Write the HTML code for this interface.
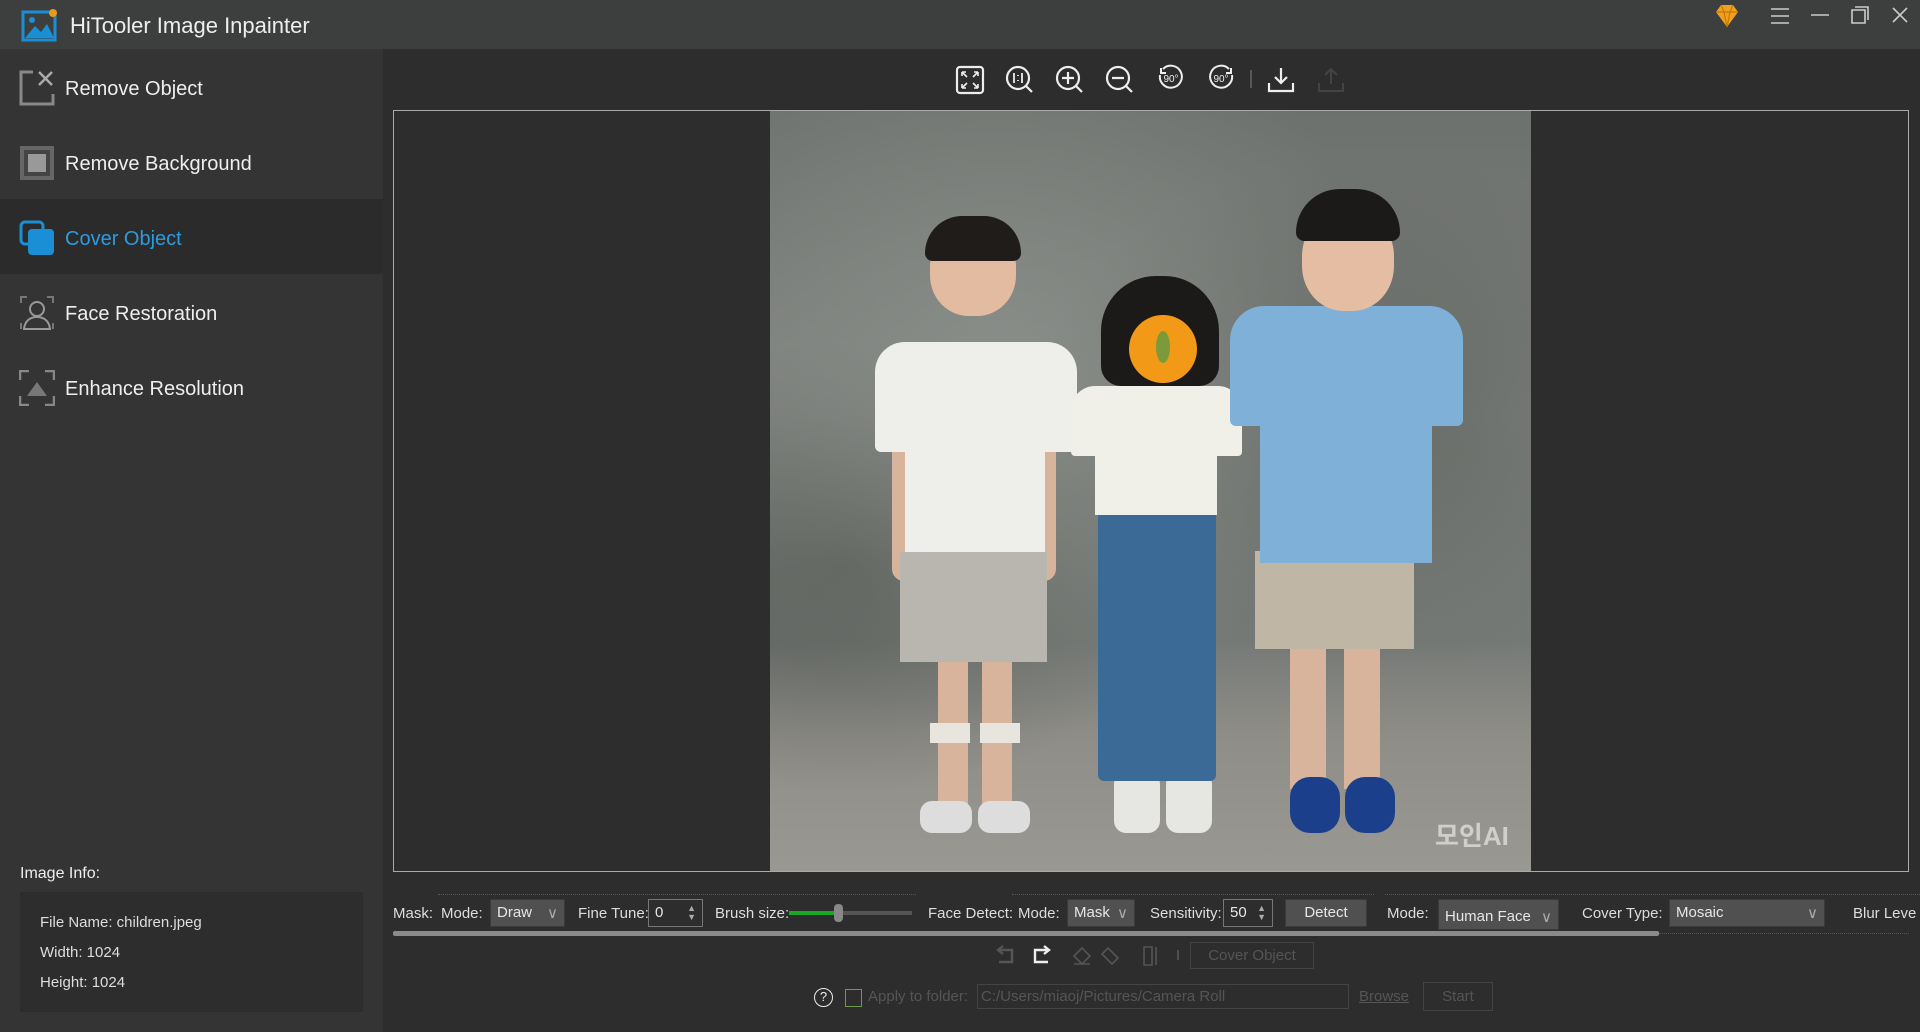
<!DOCTYPE html>
<html><head><meta charset="utf-8"><style>
*{margin:0;padding:0;box-sizing:border-box}
body{width:1920px;height:1032px;background:#2c2d2c;font-family:"Liberation Sans",sans-serif;color:#ddd;position:relative;overflow:hidden}
.a{position:absolute}
#title{left:0;top:0;width:1920px;height:49px;background:#3d3f3f}
#side{left:0;top:49px;width:383px;height:983px;background:#343434}
.item{position:absolute;left:0;width:383px;height:75px;font-size:20px;color:#eee}
.item span{position:absolute;left:65px;top:29px}
.item svg{position:absolute;left:19px;top:21px}
.t{position:absolute;font-size:15px;color:#ddd;white-space:nowrap}
.dd{position:absolute;background:#505050;border:1px solid #3a3a3a;font-size:15px;color:#e6e6e6;padding:4px 6px}
.dis{color:#555}
</style></head><body>
<div id="title" class="a">
<svg class="a" style="left:21px;top:7px" width="38" height="36" viewBox="0 0 38 36"><rect x="2" y="5" width="32" height="28" fill="none" stroke="#1a8fd6" stroke-width="3"/><circle cx="11" cy="13" r="3" fill="#1a8fd6"/><path d="M4 31 L14 19 L20 25 L26 17 L33 31Z" fill="#1a8fd6"/><circle cx="32" cy="6" r="4" fill="#e89a1c"/></svg>
<div class="a" style="left:70px;top:13px;font-size:22px;color:#eee">HiTooler Image Inpainter</div>
<svg class="a" style="left:1712px;top:3px" width="30" height="26" viewBox="0 0 30 26"><path d="M4 9 L9 2 H21 L26 9 L15 24Z" fill="#f0a020"/><path d="M4 9H26M9 2L12 9L15 24L18 9L21 2" stroke="#c57a00" stroke-width="1.2" fill="none"/></svg>
<svg class="a" style="left:1770px;top:6px" width="20" height="20"><path d="M1 3H19M1 10H19M1 17H19" stroke="#ccc" stroke-width="1.6"/></svg>
<svg class="a" style="left:1810px;top:6px" width="20" height="20"><path d="M1 9H19" stroke="#ccc" stroke-width="1.6"/></svg>
<svg class="a" style="left:1850px;top:5px" width="20" height="20"><path d="M5 2H18V15M2 5H15V18H2Z" stroke="#ccc" stroke-width="1.6" fill="none"/></svg>
<svg class="a" style="left:1890px;top:5px" width="20" height="20"><path d="M3 3L17 17M17 3L3 17" stroke="#ccc" stroke-width="1.6"/></svg>
</div>
<div id="side" class="a">
<div class="item" style="top:0"><svg width="36" height="36"><path d="M14 2H2V34H34V24" stroke="#888" stroke-width="3" fill="none"/><path d="M20 2L33 15M33 2L20 15" stroke="#aaa" stroke-width="2.5"/></svg><span>Remove Object</span></div>
<div class="item" style="top:75px"><svg width="36" height="36"><rect x="1" y="1" width="34" height="34" fill="#666"/><rect x="5" y="5" width="26" height="26" fill="#444"/><rect x="9" y="9" width="18" height="18" fill="#999"/></svg><span>Remove Background</span></div>
<div class="item" style="top:150px;background:#2b2b2b;color:#2d9be0"><svg width="36" height="36"><rect x="2" y="2" width="22" height="22" rx="4" fill="none" stroke="#1a8fd6" stroke-width="3"/><rect x="9" y="9" width="26" height="26" rx="4" fill="#1a8fd6"/></svg><span>Cover Object</span></div>
<div class="item" style="top:225px"><svg width="36" height="36"><path d="M2 8V2H8M28 2H34V8M2 28V34M34 28V34" stroke="#777" stroke-width="2" fill="none"/><circle cx="18" cy="14" r="7" stroke="#999" stroke-width="2" fill="none"/><path d="M5 34C6 25 12 22 18 22C24 22 30 25 31 34Z" stroke="#999" stroke-width="2" fill="none"/></svg><span>Face Restoration</span></div>
<div class="item" style="top:300px"><svg width="36" height="36"><path d="M1 10V1H10M26 1H35V10M1 26V35H10M26 35H35V26" stroke="#888" stroke-width="2.5" fill="none"/><path d="M8 26L18 12L28 26Z" fill="#777"/></svg><span>Enhance Resolution</span></div>
<div class="a" style="left:20px;top:816px;font-size:16px;color:#eee">Image Info:</div>
<div class="a" style="left:20px;top:843px;width:343px;height:120px;background:#2c2d2c"></div>
<div class="t" style="left:40px;top:865px">File Name: children.jpeg</div>
<div class="t" style="left:40px;top:895px">Width: 1024</div>
<div class="t" style="left:40px;top:925px">Height: 1024</div>
</div>
<!-- top toolbar -->
<svg class="a" style="left:950px;top:64px" width="400" height="34" viewBox="0 0 400 34">
<g stroke="#eee" stroke-width="2.2" fill="none">
<rect x="7" y="3" width="26" height="26" rx="3"/><path d="M12 8L17 13M12 8V12M12 8H16M28 8L23 13M28 8V12M28 8H24M12 24L17 19M12 24V20M12 24H16M28 24L23 19M28 24V20M28 24H24" stroke-width="1.6"/>
<circle cx="68" cy="14" r="11"/><path d="M76 22L82 28"/><path d="M64 9V19M72 9V19M68 11V12M68 16V17" stroke-width="1.8"/>
<circle cx="118" cy="14" r="11"/><path d="M126 22L132 28M112 14H124M118 8V20"/>
<circle cx="168" cy="14" r="11"/><path d="M176 22L182 28M162 14H174"/>
<path d="M213 5A11 11 0 1 1 210 11M211 4V9H216" stroke-width="2"/>
<path d="M279 5A11 11 0 1 0 282 11M281 4V9H276" stroke-width="2"/>
<path d="M331 4V19M325 13L331 19L337 13M319 19V27H343V19"/>
</g>
<text x="221" y="18" font-size="10" fill="#eee" text-anchor="middle" font-family="Liberation Sans">90°</text>
<text x="271" y="18" font-size="10" fill="#eee" text-anchor="middle" font-family="Liberation Sans">90°</text>
<path d="M301 6V24" stroke="#666" stroke-width="1.5"/>
<path d="M381 20V5M375 11L381 5L387 11M369 19V27H393V19" stroke="#444" stroke-width="2" fill="none"/>
</svg>
<!-- canvas -->
<div class="a" style="left:393px;top:110px;width:1516px;height:762px;border:1px solid #aaa;background:#2c2d2c"></div>
<div class="a" style="left:770px;top:111px;width:761px;height:760px;overflow:hidden;background:linear-gradient(180deg,#6d716d 0%,#80837f 40%,#767a76 70%,#8e8d88 82%,#9a9892 100%)">
<div class="a" style="left:0;top:0;width:761px;height:760px;background:radial-gradient(ellipse at 30% 30%,rgba(150,155,150,.5),transparent 50%),radial-gradient(ellipse at 80% 40%,rgba(60,65,60,.35),transparent 40%),radial-gradient(ellipse at 10% 60%,rgba(50,55,50,.4),transparent 35%)"></div>
<!-- left boy -->
<div class="a" style="left:122px;top:330px;width:26px;height:140px;background:#d8b49c;border-radius:12px"></div>
<div class="a" style="left:260px;top:330px;width:26px;height:140px;background:#d8b49c;border-radius:12px"></div>
<div class="a" style="left:168px;top:540px;width:30px;height:160px;background:#d8b49c"></div>
<div class="a" style="left:212px;top:540px;width:30px;height:160px;background:#d8b49c"></div>
<div class="a" style="left:160px;top:612px;width:40px;height:20px;background:#e8e4de"></div>
<div class="a" style="left:210px;top:612px;width:40px;height:20px;background:#e8e4de"></div>
<div class="a" style="left:150px;top:690px;width:52px;height:32px;background:#ddd;border-radius:12px"></div>
<div class="a" style="left:208px;top:690px;width:52px;height:32px;background:#ddd;border-radius:12px"></div>
<div class="a" style="left:130px;top:441px;width:147px;height:110px;background:#b8b6ae"></div>
<div class="a" style="left:105px;top:231px;width:202px;height:110px;background:#eeeeea;border-radius:30px 30px 6px 6px"></div>
<div class="a" style="left:135px;top:300px;width:140px;height:141px;background:#eeeeea"></div>
<div class="a" style="left:160px;top:115px;width:86px;height:90px;background:#e2bba0;border-radius:45%"></div>
<div class="a" style="left:155px;top:105px;width:96px;height:45px;background:#1f1c1a;border-radius:48px 48px 10px 10px"></div>
<!-- girl -->
<div class="a" style="left:344px;top:661px;width:46px;height:61px;background:#e6e6e2;border-radius:12px"></div>
<div class="a" style="left:396px;top:661px;width:46px;height:61px;background:#e6e6e2;border-radius:12px"></div>
<div class="a" style="left:328px;top:392px;width:118px;height:278px;background:#3c6a96;border-radius:6px"></div>
<div class="a" style="left:301px;top:275px;width:171px;height:70px;background:#f0efe8;border-radius:24px 24px 4px 4px"></div>
<div class="a" style="left:325px;top:330px;width:122px;height:74px;background:#f0efe8"></div>
<div class="a" style="left:331px;top:165px;width:118px;height:110px;background:#1c1a18;border-radius:55px 55px 20px 20px"></div>
<div class="a" style="left:359px;top:204px;width:68px;height:68px;background:#f29a18;border-radius:50%"></div>
<div class="a" style="left:386px;top:220px;width:14px;height:32px;background:#7c9a3a;border-radius:50%"></div>
<!-- right boy -->
<div class="a" style="left:520px;top:538px;width:36px;height:140px;background:#d8b49c"></div>
<div class="a" style="left:574px;top:538px;width:36px;height:140px;background:#d8b49c"></div>
<div class="a" style="left:520px;top:666px;width:50px;height:56px;background:#1b3f8a;border-radius:20px"></div>
<div class="a" style="left:575px;top:666px;width:50px;height:56px;background:#1b3f8a;border-radius:20px"></div>
<div class="a" style="left:485px;top:440px;width:159px;height:98px;background:#bfb6a6"></div>
<div class="a" style="left:460px;top:195px;width:233px;height:120px;background:#7fb0d8;border-radius:34px 34px 6px 6px"></div>
<div class="a" style="left:490px;top:300px;width:172px;height:152px;background:#7fb0d8"></div>
<div class="a" style="left:532px;top:100px;width:92px;height:100px;background:#e4bda2;border-radius:45%"></div>
<div class="a" style="left:526px;top:78px;width:104px;height:52px;background:#1c1a18;border-radius:52px 52px 10px 10px"></div>
<div class="a" style="left:665px;top:705px;font-size:26px;color:rgba(255,255,255,.55);font-family:'Liberation Sans','Noto Sans CJK KR',sans-serif;font-weight:bold">모인AI</div>
</div>
<!-- bottom toolbar -->
<div class="a" style="left:438px;top:894px;width:478px;border-top:1px dotted #555"></div>
<div class="a" style="left:1012px;top:894px;width:362px;border-top:1px dotted #555"></div>
<div class="a" style="left:1385px;top:894px;width:535px;border-top:1px dotted #555"></div>
<div class="t" style="left:393px;top:905px">Mask:</div>
<div class="t" style="left:441px;top:905px">Mode:</div>
<div class="dd" style="left:490px;top:899px;width:75px;height:28px">Draw <span style="float:right;color:#aaa">∨</span></div>
<div class="t" style="left:578px;top:905px">Fine Tune:</div>
<div class="dd" style="left:648px;top:899px;width:55px;height:28px;background:#2c2d2c;border-color:#777">0 <span style="float:right;font-size:9px;color:#aaa;line-height:9px">▲<br>▼</span></div>
<div class="t" style="left:715px;top:905px">Brush size:</div>
<div class="a" style="left:789px;top:911px;width:123px;height:4px;background:#555"></div>
<div class="a" style="left:789px;top:911px;width:50px;height:4px;background:#17a825"></div>
<div class="a" style="left:834px;top:904px;width:9px;height:18px;background:#888;border-radius:4px"></div>
<div class="t" style="left:928px;top:905px">Face Detect:</div>
<div class="t" style="left:1018px;top:905px">Mode:</div>
<div class="dd" style="left:1067px;top:899px;width:68px;height:28px">Mask <span style="float:right;color:#aaa">∨</span></div>
<div class="t" style="left:1150px;top:905px">Sensitivity:</div>
<div class="dd" style="left:1223px;top:899px;width:50px;height:28px;background:#2c2d2c;border-color:#777">50 <span style="float:right;font-size:9px;color:#aaa;line-height:9px">▲<br>▼</span></div>
<div class="dd" style="left:1285px;top:899px;width:82px;height:28px;text-align:center">Detect</div>
<div class="t" style="left:1387px;top:905px">Mode:</div>
<div class="dd" style="left:1438px;top:899px;width:121px;height:31px;padding-top:8px">Human Face <span style="float:right;color:#aaa">∨</span></div>
<div class="t" style="left:1582px;top:905px">Cover Type:</div>
<div class="dd" style="left:1669px;top:899px;width:156px;height:28px">Mosaic <span style="float:right;color:#aaa">∨</span></div>
<div class="t" style="left:1853px;top:905px">Blur Leve</div>
<div class="a" style="left:393px;top:931px;width:1266px;height:5px;background:#8a8a8a;border-radius:2px"></div>
<div class="a" style="left:1659px;top:933px;width:250px;border-top:1px dotted #555"></div>
<!-- row 2 -->
<svg class="a" style="left:990px;top:942px" width="190" height="28"><g fill="none" stroke-width="2.4"><path d="M9 8H22V20H9M13 4L8 8L13 12" stroke="#555"/><path d="M58 8H45V20H58M54 4L59 8L54 12" stroke="#eee"/><path d="M84 14L92 6L100 14L92 22ZM84 22H100" stroke="#555" stroke-width="1.6"/><path d="M118 6L128 16L122 22L112 12Z" stroke="#555" stroke-width="1.6"/><path d="M154 5H162V23H154ZM166 5V23" stroke="#555" stroke-width="1.6"/><path d="M188 8V18" stroke="#666" stroke-width="1.2"/></g></svg>
<div class="a dis" style="left:1190px;top:942px;width:124px;height:27px;border:1px solid #444;font-size:15px;text-align:center;line-height:25px">Cover Object</div>
<!-- row 3 -->
<div class="a" style="left:814px;top:988px;width:19px;height:19px;border:1.6px solid #eee;border-radius:50%;font-size:13px;text-align:center;line-height:16px;color:#eee">?</div>
<div class="a" style="left:845px;top:989px;width:17px;height:18px;border:1.5px solid #6a9a4a"></div>
<div class="a dis" style="left:868px;top:988px;font-size:15px">Apply to folder:</div>
<div class="a dis" style="left:977px;top:984px;width:372px;height:25px;border:1px solid #444;font-size:15px;padding:3px 3px">C:/Users/miaoj/Pictures/Camera Roll</div>
<div class="a dis" style="left:1359px;top:988px;font-size:15px;text-decoration:underline">Browse</div>
<div class="a dis" style="left:1423px;top:982px;width:70px;height:29px;border:1px solid #444;font-size:15px;text-align:center;line-height:27px">Start</div>
</body></html>
